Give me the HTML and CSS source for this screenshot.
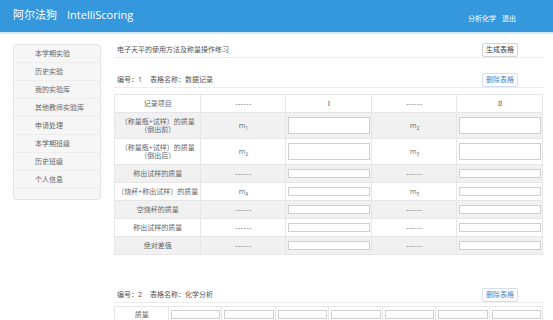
FILE: index.html
```html
<!DOCTYPE html>
<html lang="zh-CN">
<head>
    <meta charset="UTF-8">
    <meta name="viewport" content="width=device-width, initial-scale=1.0">
    <title>阿尔法狗 IntelliScoring</title>
    <link rel="stylesheet" href="styles.css">
</head>
<body>
    <header class="topbar">
        <div class="brand">阿尔法狗<span class="brand-en">IntelliScoring</span></div>
        <nav class="top-nav">
            <a href="#">分析化学</a>
            <a href="#">退出</a>
        </nav>
    </header>

    <div class="page">
        <ul class="side-menu">
            <li>本学期实验</li>
            <li>历史实验</li>
            <li>我的实验库</li>
            <li>其他教师实验库</li>
            <li>申请处理</li>
            <li>本学期班级</li>
            <li>历史班级</li>
            <li>个人信息</li>
        </ul>

        <main class="content">
            <div class="exp-title">
                <span>电子天平的使用方法及称量操作练习</span>
                <button class="btn">生成表格</button>
            </div>

            <section class="sheet">
                <div class="sheet-head">
                    <span>编号：1<span class="sheet-name">表格名称：数据记录</span></span>
                    <button class="btn btn-del">删除表格</button>
                </div>
                <table class="record">
                    <thead>
                        <tr>
                            <td>记录项目</td>
                            <td class="dash">------</td>
                            <td class="roman">Ⅰ</td>
                            <td class="dash">------</td>
                            <td class="roman">Ⅱ</td>
                        </tr>
                    </thead>
                    <tbody>
                        <tr class="tall">
                            <td>（称量瓶+试样）的质量<br>（倒出前）</td>
                            <td>m<sub>1</sub></td>
                            <td><input type="text" class="cell-input"></td>
                            <td>m<sub>2</sub></td>
                            <td><input type="text" class="cell-input"></td>
                        </tr>
                        <tr class="tall">
                            <td>（称量瓶+试样）的质量<br>（倒出后）</td>
                            <td>m<sub>2</sub></td>
                            <td><input type="text" class="cell-input"></td>
                            <td>m<sub>3</sub></td>
                            <td><input type="text" class="cell-input"></td>
                        </tr>
                        <tr>
                            <td>称出试样的质量</td>
                            <td class="dash">------</td>
                            <td><input type="text" class="cell-input"></td>
                            <td class="dash">------</td>
                            <td><input type="text" class="cell-input"></td>
                        </tr>
                        <tr>
                            <td>（烧杯+称出试样）的质量</td>
                            <td>m<sub>4</sub></td>
                            <td><input type="text" class="cell-input"></td>
                            <td>m<sub>5</sub></td>
                            <td><input type="text" class="cell-input"></td>
                        </tr>
                        <tr>
                            <td>空烧杯的质量</td>
                            <td class="dash">------</td>
                            <td><input type="text" class="cell-input"></td>
                            <td class="dash">------</td>
                            <td><input type="text" class="cell-input"></td>
                        </tr>
                        <tr>
                            <td>称出试样的质量</td>
                            <td class="dash">------</td>
                            <td><input type="text" class="cell-input"></td>
                            <td class="dash">------</td>
                            <td><input type="text" class="cell-input"></td>
                        </tr>
                        <tr>
                            <td>绝对差值</td>
                            <td class="dash">------</td>
                            <td><input type="text" class="cell-input"></td>
                            <td class="dash">------</td>
                            <td><input type="text" class="cell-input"></td>
                        </tr>
                    </tbody>
                </table>
            </section>

            <section class="sheet sheet-next">
                <div class="sheet-head">
                    <span>编号：2<span class="sheet-name">表格名称：化学分析</span></span>
                    <button class="btn btn-del">删除表格</button>
                </div>
                <table class="record record-wide">
                    <tr>
                        <td>质量</td>
                        <td><input type="text" class="cell-input"></td>
                        <td><input type="text" class="cell-input"></td>
                        <td><input type="text" class="cell-input"></td>
                        <td><input type="text" class="cell-input"></td>
                        <td><input type="text" class="cell-input"></td>
                        <td><input type="text" class="cell-input"></td>
                        <td><input type="text" class="cell-input"></td>
                    </tr>
                </table>
            </section>
        </main>
    </div>
</body>
</html>
```

FILE: styles.css
```css
/* base */
html, body {
    overflow: hidden;
}

body {
    margin: 0;
    font-family: "Open Sans", "Noto Sans CJK SC", sans-serif;
    font-size: 7px;
    color: #555;
    background: #fff;
}

/* top bar */
.topbar {
    height: 32px;
    display: flex;
    justify-content: space-between;
    align-items: flex-start;
    padding: 0 37px 0 13px;
    background: #3598dc;
    border-bottom: 2px solid #d3eaf8;
}

.brand {
    color: #fff;
    font-size: 11px;
    line-height: 14px;
    padding-top: 8px;
}

.brand-en {
    margin-left: 10px;
}

.top-nav {
    display: flex;
    gap: 6px;
    padding-top: 15px;
    line-height: 8px;
}

.top-nav a {
    color: #fff;
    text-decoration: none;
}

/* layout */
.page {
    display: flex;
    align-items: flex-start;
}

.side-menu {
    list-style: none;
    margin: 10px 0 0 13px;
    padding: 0;
    width: 86px;
    height: 154px;
    background: #f6f6f6;
    border: 1px solid #e4e4e4;
    border-radius: 3px;
}

.side-menu li {
    height: 17px;
    line-height: 17px;
    padding-left: 21px;
    color: #666;
    border-bottom: 0.4px solid #ededed;
}

.content {
    flex: 1;
    margin: 6px 10px 0 13px;
}

/* title rows */
.exp-title,
.sheet-head {
    height: 17px;
    display: flex;
    justify-content: space-between;
    align-items: center;
    padding: 0 25px 0 3px;
    border-bottom: 1px solid #ececec;
    color: #555;
}

.exp-title .btn {
    margin-top: 3px;
}

.sheet {
    margin-top: 12px;
}

.sheet-next {
    margin-top: 30px;
}

.sheet-name {
    margin-left: 8px;
}

.btn {
    width: 36px;
    height: 14px;
    padding: 0;
    font-family: inherit;
    font-size: 7px;
    line-height: 12px;
    color: #444;
    background: #fff;
    border: 1px solid #d4d4d4;
    border-radius: 2px;
}

.btn-del {
    margin-top: 3px;
    color: #4a86c8;
    border-color: #cfdff0;
}

/* tables */
.record {
    width: 100%;
    margin-top: 6px;
    border-collapse: collapse;
    table-layout: fixed;
    text-align: center;
    color: #666;
    border: 1px solid #e6e6e6;
}

.record td {
    height: 17px;
    padding: 0 1px 0 2px;
    border: 1px solid #e6e6e6;
    line-height: 8px;
    vertical-align: middle;
    color: #666;
}

.record tbody tr:nth-child(odd) {
    background: #f1f1f1;
}

.record tr.tall td {
    height: 25px;
}

.record sub {
    font-size: 5px;
    line-height: 0;
}

.dash {
    color: #999;
    letter-spacing: 0.5px;
}

.roman {
    font-family: "DejaVu Serif", serif;
    font-size: 7px;
    color: #555;
}

.cell-input {
    display: block;
    box-sizing: border-box;
    width: 100%;
    height: 9px;
    margin: 0;
    padding: 0;
    background: #fff;
    border: 1px solid #cfcfcf;
}

.tall .cell-input {
    height: 17px;
}

.record-wide {
    margin-top: 3px;
}

.record-wide td {
    height: 15px;
}

.record-wide tr {
    background: #fff !important;
}
```
